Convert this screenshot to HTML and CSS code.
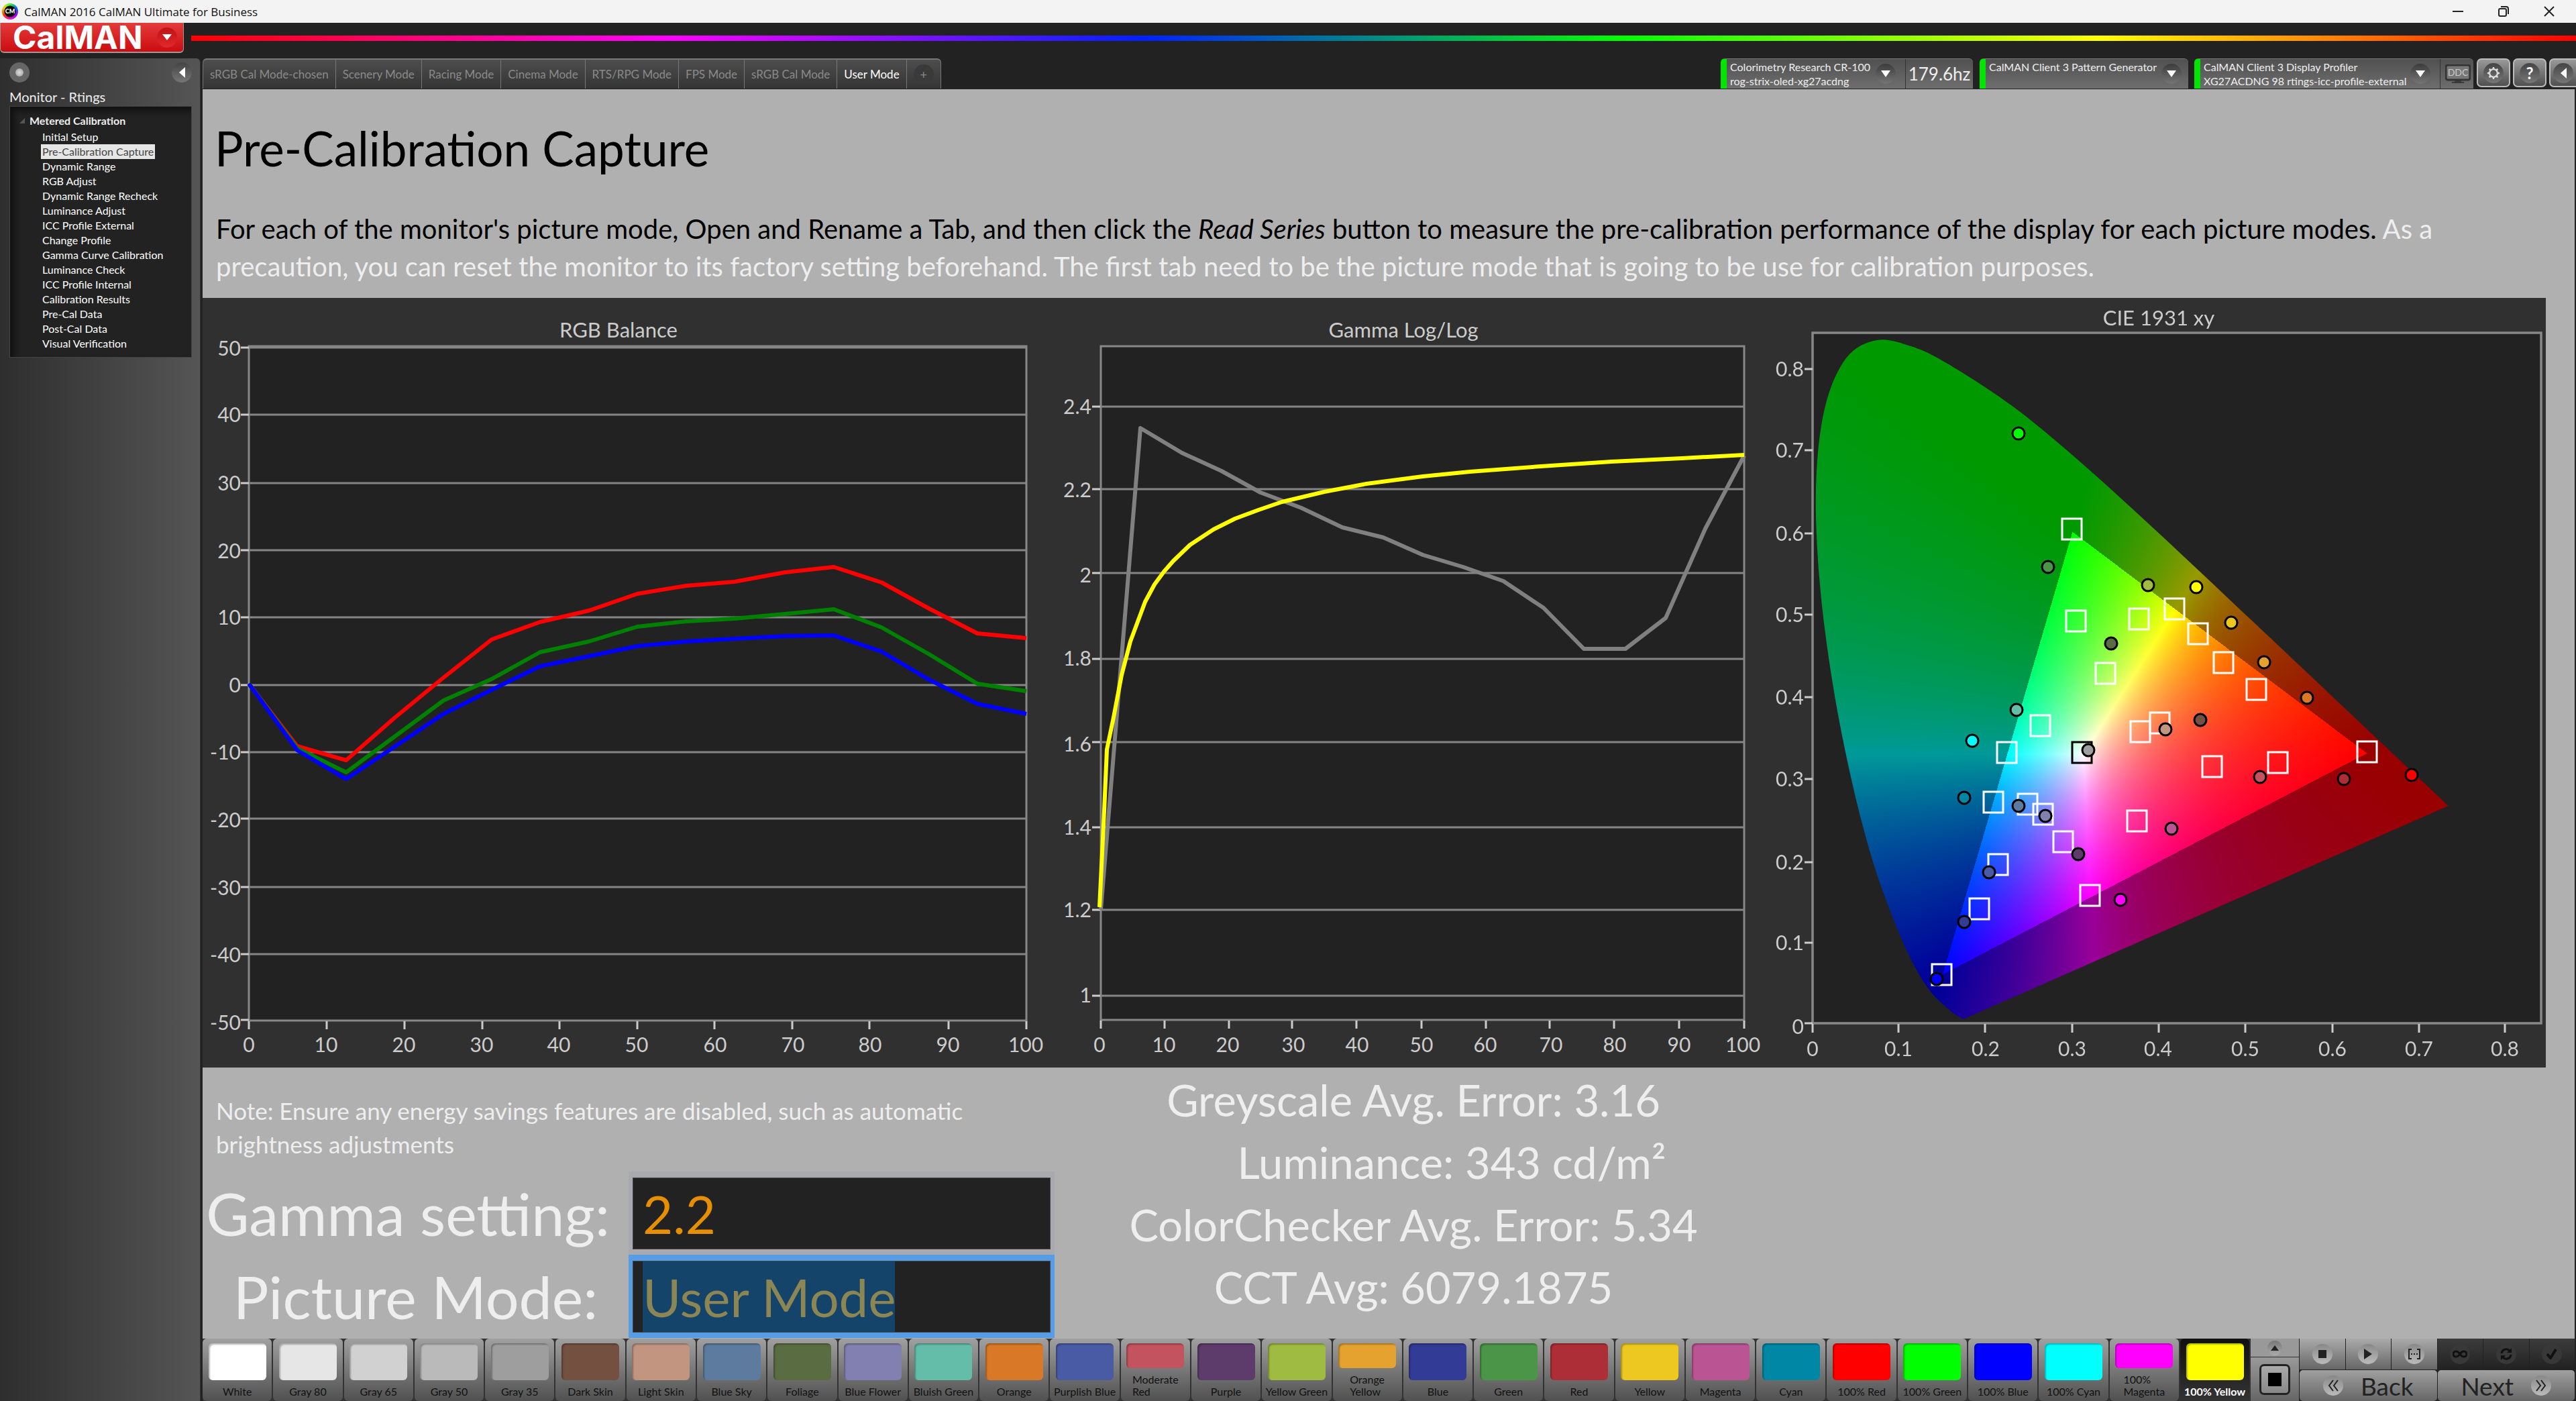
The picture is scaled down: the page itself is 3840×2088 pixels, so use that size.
FILE: index.html
```html
<!DOCTYPE html>
<html lang="en">
<head>
<meta charset="utf-8">
<title>CalMAN 2016 CalMAN Ultimate for Business</title>
<link rel="stylesheet" href="styles.css">
</head>
<body>
<header class="titlebar">
  <span class="app-icon">CM</span>
  <span class="window-title">CalMAN 2016 CalMAN Ultimate for Business</span>
  <div class="window-controls">
    <button type="button" aria-label="Minimize"><svg width="16" height="16" viewBox="0 0 16 16"><path d="M0 8h16" class="thin"/></svg></button>
    <button type="button" aria-label="Restore"><svg width="16" height="16" viewBox="0 0 16 16"><rect x="1" y="4" width="11" height="11" rx="2" class="thin"/><path d="M4 1h8a3 3 0 0 1 3 3v8" class="thin"/></svg></button>
    <button type="button" aria-label="Close"><svg width="16" height="16" viewBox="0 0 16 16"><path d="M1 1l14 14M15 1L1 15" class="thin"/></svg></button>
  </div>
</header>

<div class="brandbar">
  <button type="button" class="brand">CalMAN<span class="knob knob-red"><svg width="14" height="10" viewBox="0 0 14 10"><path d="M0 0h14L7 9z" fill="#fff"/></svg></span></button>
  <div class="rainbow"></div>
</div>

<div class="workspace">
  <aside class="sidebar">
    <div class="sidebar-tools">
      <button type="button" class="knob knob-dot" aria-label="Record"><span class="dot"></span></button>
      <button type="button" class="knob" aria-label="Collapse"><svg width="9" height="16" viewBox="0 0 9 16"><path d="M9 0v16L0 8z" fill="#fff"/></svg></button>
    </div>
    <h2 class="sidebar-title">Monitor - Rtings</h2>
    <nav class="steps">
      <div class="steps-head"><svg width="8" height="8" viewBox="0 0 8 8"><path d="M8 0v8H0z" fill="#555"/></svg>Metered Calibration</div>
      <ul>
        <li><a href="#">Initial Setup</a></li>
        <li><a href="#" class="current">Pre-Calibration Capture</a></li>
        <li><a href="#">Dynamic Range</a></li>
        <li><a href="#">RGB Adjust</a></li>
        <li><a href="#">Dynamic Range Recheck</a></li>
        <li><a href="#">Luminance Adjust</a></li>
        <li><a href="#">ICC Profile External</a></li>
        <li><a href="#">Change Profile</a></li>
        <li><a href="#">Gamma Curve Calibration</a></li>
        <li><a href="#">Luminance Check</a></li>
        <li><a href="#">ICC Profile Internal</a></li>
        <li><a href="#">Calibration Results</a></li>
        <li><a href="#">Pre-Cal Data</a></li>
        <li><a href="#">Post-Cal Data</a></li>
        <li><a href="#">Visual Verification</a></li>
      </ul>
    </nav>
  </aside>

  <main class="main">
    <div class="toolbar">
      <div class="tabs">
        <button type="button" class="tab">sRGB Cal Mode-chosen</button>
        <button type="button" class="tab">Scenery Mode</button>
        <button type="button" class="tab">Racing Mode</button>
        <button type="button" class="tab">Cinema Mode</button>
        <button type="button" class="tab">RTS/RPG Mode</button>
        <button type="button" class="tab">FPS Mode</button>
        <button type="button" class="tab">sRGB Cal Mode</button>
        <button type="button" class="tab active">User Mode</button>
        <button type="button" class="tab tab-add" aria-label="Add tab"><span class="knob knob-dim">+</span></button>
      </div>
      <div class="devices">
        <div class="device device-meter">
          <div class="device-name">Colorimetry Research CR-100<br>rog-strix-oled-xg27acdng</div>
          <button type="button" class="knob knob-pick" aria-label="Meter"><svg width="14" height="10" viewBox="0 0 14 10"><path d="M0 0h14L7 10z" fill="#fff"/></svg></button>
          <div class="device-rate">179.6hz</div>
        </div>
        <div class="device device-source">
          <div class="device-name">CalMAN Client 3 Pattern Generator</div>
          <button type="button" class="knob knob-pick" aria-label="Source"><svg width="14" height="10" viewBox="0 0 14 10"><path d="M0 0h14L7 10z" fill="#fff"/></svg></button>
        </div>
        <div class="device device-display">
          <div class="device-name">CalMAN Client 3 Display Profiler<br>XG27ACDNG 98 rtings-icc-profile-external</div>
          <button type="button" class="knob knob-pick" aria-label="Display"><svg width="14" height="10" viewBox="0 0 14 10"><path d="M0 0h14L7 10z" fill="#fff"/></svg></button>
          <div class="device-ddc"><svg width="38" height="28" viewBox="0 0 38 28"><path d="M14 23h10v3h4v2H10v-2h4z" fill="#3a3a3a"/><rect x="1" y="1" width="36" height="22" rx="3" fill="#777" stroke="#333" stroke-width="3"/><text x="19" y="17" class="ddc">DDC</text></svg></div>
        </div>
        <div class="tools">
          <button type="button" class="tool" aria-label="Settings"><span class="knob"><svg width="20" height="20" viewBox="0 0 22 22"><g fill="#ddd"><path id="tooth" d="M9 4l1-3h2l1 3z"/><use href="#tooth" transform="rotate(45 11 11)"/><use href="#tooth" transform="rotate(90 11 11)"/><use href="#tooth" transform="rotate(135 11 11)"/><use href="#tooth" transform="rotate(180 11 11)"/><use href="#tooth" transform="rotate(225 11 11)"/><use href="#tooth" transform="rotate(270 11 11)"/><use href="#tooth" transform="rotate(315 11 11)"/></g><circle cx="11" cy="11" r="6.5" fill="none" stroke="#ddd" stroke-width="2.5"/></svg></span></button>
          <button type="button" class="tool" aria-label="Help"><span class="knob">?</span></button>
          <button type="button" class="tool tool-last" aria-label="Collapse panel"><span class="knob"><svg width="9" height="16" viewBox="0 0 9 16"><path d="M9 0v16L0 8z" fill="#fff"/></svg></span></button>
        </div>
      </div>
    </div>

    <section class="page">
      <h1>Pre-Calibration Capture</h1>
      <p class="intro">For each of the monitor's picture mode, Open and Rename a Tab, and then click the <em>Read Series</em> button to measure the pre-calibration performance of the display for each picture modes. <span class="light">As a<br>precaution, you can reset the monitor to its factory setting beforehand. The first tab need to be the picture mode that is going to be use for calibration purposes.</span></p>

      <div class="charts">
        <svg class="chart" viewBox="302 444 1268 1147" role="img" aria-label="RGB Balance">
          <rect class="plot" x="371" y="516" width="1159" height="1005"/>
          <path class="grid" d="M371 518H1530M371 618H1530M371 720H1530M371 820H1530M371 920H1530M371 1021H1530M371 1121H1530M371 1220H1530M371 1322H1530M371 1422H1530"/>
          <path class="tick" d="M359 518h12M359 618h12M359 720h12M359 820h12M359 920h12M359 1021h12M359 1121h12M359 1220h12M359 1322h12M359 1422h12M359 1520h12M371 1522v12M487 1522v12M603 1522v12M719 1522v12M834 1522v12M950 1522v12M1065 1522v12M1181 1522v12M1296 1522v12M1414 1522v12M1530 1522v12"/>
          <text class="name" x="922" y="503">RGB Balance</text>
          <g class="ylab"><text x="359" y="530">50</text><text x="359" y="629">40</text><text x="359" y="731">30</text><text x="359" y="832">20</text><text x="359" y="931">10</text><text x="359" y="1032">0</text><text x="359" y="1132">-10</text><text x="359" y="1233">-20</text><text x="359" y="1334">-30</text><text x="359" y="1434">-40</text><text x="359" y="1535">-50</text></g>
          <g class="xlab"><text x="371" y="1568">0</text><text x="486" y="1568">10</text><text x="602" y="1568">20</text><text x="718" y="1568">30</text><text x="833" y="1568">40</text><text x="949" y="1568">50</text><text x="1066" y="1568">60</text><text x="1182" y="1568">70</text><text x="1297" y="1568">80</text><text x="1413" y="1568">90</text><text x="1529" y="1568">100</text></g>
          <polyline class="series" stroke="#f00" points="371,1019 443,1112 516,1133 588,1070 661,1010 733,953 805,927 878,910 950,885 1023,873 1095,867 1170,853 1243,845 1314,868 1385,907 1457,944 1530,951"/>
          <polyline class="series" stroke="#008000" points="371,1019 443,1115 516,1151 588,1098 661,1044 733,1012 805,972 878,956 950,934 1023,926 1095,922 1170,915 1243,908 1314,935 1385,975 1457,1019 1530,1030"/>
          <polyline class="series" stroke="#00f" points="371,1019 443,1118 516,1161 588,1113 661,1064 733,1028 805,993 878,978 950,963 1023,956 1095,952 1170,948 1243,947 1314,971 1385,1013 1457,1049 1530,1064"/>
        </svg>

        <svg class="chart" viewBox="1570 444 1070 1147" role="img" aria-label="Gamma Log/Log">
          <rect class="plot" x="1641" y="516" width="959" height="1004"/>
          <path class="grid" d="M1641 606H2600M1641 729H2600M1641 854H2600M1641 982H2600M1641 1106H2600M1641 1233H2600M1641 1356H2600M1641 1484H2600"/>
          <path class="tick" d="M1628 606h12M1628 729h12M1628 854h12M1628 982h12M1628 1106h12M1628 1233h12M1628 1356h12M1628 1484h12M1641 1521v12M1736 1521v12M1832 1521v12M1926 1521v12M2022 1521v12M2119 1521v12M2215 1521v12M2310 1521v12M2406 1521v12M2503 1521v12M2600 1521v12"/>
          <text class="name" x="2092" y="503">Gamma Log/Log</text>
          <g class="ylab"><text x="1627" y="617">2.4</text><text x="1627" y="741">2.2</text><text x="1627" y="868">2</text><text x="1627" y="992">1.8</text><text x="1627" y="1120">1.6</text><text x="1627" y="1244">1.4</text><text x="1627" y="1367">1.2</text><text x="1627" y="1494">1</text></g>
          <g class="xlab"><text x="1639" y="1568">0</text><text x="1735" y="1568">10</text><text x="1830" y="1568">20</text><text x="1928" y="1568">30</text><text x="2023" y="1568">40</text><text x="2119" y="1568">50</text><text x="2214" y="1568">60</text><text x="2312" y="1568">70</text><text x="2407" y="1568">80</text><text x="2503" y="1568">90</text><text x="2598" y="1568">100</text></g>
          <polyline class="series" stroke="#808080" points="1641,1356 1700,638 1762,675 1821,702 1879,734 1940,757 2001,786 2062,801 2121,827 2181,845 2241,866 2301,906 2361,967 2423,967 2483,921 2542,788 2600,679"/>
          <polyline class="series" stroke="#ff0" points="1639,1352 1646,1209 1650,1117 1660,1069 1672,1006 1685,956 1707,897 1721,871 1735,852 1749,836 1774,812 1809,789 1841,773 1876,760 1911,748 1974,733 2037,721 2121,710 2191,703 2297,695 2402,688 2507,683 2600,678"/>
        </svg>

        <svg class="chart" viewBox="2640 444 1155 1147" role="img" aria-label="CIE 1931 xy">
          <rect class="plot" x="2702" y="496" width="1086" height="1029"/>
          <foreignObject x="2702" y="496" width="1086" height="1029"><canvas id="gamut" class="gamut" width="1086" height="1029"></canvas></foreignObject>
          <rect class="frame" x="2702" y="496" width="1086" height="1029"/>
          <path class="tick" d="M2690 550h12M2690 671h12M2690 795h12M2690 916h12M2690 1039h12M2690 1161h12M2690 1285h12M2690 1405h12M2690 1525h12M2702 1526v13M2830 1526v13M2959 1526v13M3089 1526v13M3218 1526v13M3347 1526v13M3477 1526v13M3606 1526v13M3734 1526v13"/>
          <text class="name" x="3218" y="485">CIE 1931 xy</text>
          <g class="ylab"><text x="2689" y="561">0.8</text><text x="2689" y="682">0.7</text><text x="2689" y="806">0.6</text><text x="2689" y="927">0.5</text><text x="2689" y="1050">0.4</text><text x="2689" y="1172">0.3</text><text x="2689" y="1296">0.2</text><text x="2689" y="1416">0.1</text><text x="2689" y="1541">0</text></g>
          <g class="xlab"><text x="2702" y="1574">0</text><text x="2830" y="1574">0.1</text><text x="2960" y="1574">0.2</text><text x="3089" y="1574">0.3</text><text x="3217" y="1574">0.4</text><text x="3347" y="1574">0.5</text><text x="3477" y="1574">0.6</text><text x="3606" y="1574">0.7</text><text x="3734" y="1574">0.8</text></g>
          <g id="targets" class="targets"></g>
          <g id="readings" class="readings"></g>
        </svg>
      </div>

      <div class="results">
        <form class="settings">
          <p class="note">Note: Ensure any energy savings features are disabled, such as automatic<br>brightness adjustments</p>
          <div class="field"><label for="gamma">Gamma setting:&nbsp;</label><div class="box"><input id="gamma" type="text" value="2.2"></div></div>
          <div class="field focused"><label for="mode">Picture Mode:</label><div class="box"><input id="mode" type="text" value="User Mode"></div></div>
        </form>
        <div class="stats">
          <p>Greyscale Avg. Error: 3.16</p>
          <p class="inset">Luminance: 343 cd/m²</p>
          <p>ColorChecker Avg. Error: 5.34</p>
          <p>CCT Avg: 6079.1875</p>
        </div>
      </div>
    </section>

    <footer class="footer">
      <div class="patches">
        <button type="button" class="patch"><i style="background:#ffffff"></i><span>White</span></button>
        <button type="button" class="patch"><i style="background:#e6e6e6"></i><span>Gray 80</span></button>
        <button type="button" class="patch"><i style="background:#d1d1d1"></i><span>Gray 65</span></button>
        <button type="button" class="patch"><i style="background:#bababa"></i><span>Gray 50</span></button>
        <button type="button" class="patch"><i style="background:#9e9e9e"></i><span>Gray 35</span></button>
        <button type="button" class="patch"><i style="background:#735040"></i><span>Dark Skin</span></button>
        <button type="button" class="patch"><i style="background:#c29580"></i><span>Light Skin</span></button>
        <button type="button" class="patch"><i style="background:#5d7b9f"></i><span>Blue Sky</span></button>
        <button type="button" class="patch"><i style="background:#5a6c41"></i><span>Foliage</span></button>
        <button type="button" class="patch"><i style="background:#8280b0"></i><span>Blue Flower</span></button>
        <button type="button" class="patch"><i style="background:#63bda8"></i><span>Bluish Green</span></button>
        <button type="button" class="patch"><i style="background:#d97827"></i><span>Orange</span></button>
        <button type="button" class="patch"><i style="background:#4a5ba5"></i><span>Purplish Blue</span></button>
        <button type="button" class="patch"><i style="background:#c3535f"></i><span>Moderate<br>Red</span></button>
        <button type="button" class="patch"><i style="background:#5d3c6b"></i><span>Purple</span></button>
        <button type="button" class="patch"><i style="background:#9fbb41"></i><span>Yellow Green</span></button>
        <button type="button" class="patch"><i style="background:#e6a22e"></i><span>Orange<br>Yellow</span></button>
        <button type="button" class="patch"><i style="background:#323b95"></i><span>Blue</span></button>
        <button type="button" class="patch"><i style="background:#4a9548"></i><span>Green</span></button>
        <button type="button" class="patch"><i style="background:#ae2e37"></i><span>Red</span></button>
        <button type="button" class="patch"><i style="background:#ecc821"></i><span>Yellow</span></button>
        <button type="button" class="patch"><i style="background:#ba5493"></i><span>Magenta</span></button>
        <button type="button" class="patch"><i style="background:#0087a5"></i><span>Cyan</span></button>
        <button type="button" class="patch"><i style="background:#ff0000"></i><span>100% Red</span></button>
        <button type="button" class="patch"><i style="background:#00ff00"></i><span>100% Green</span></button>
        <button type="button" class="patch"><i style="background:#0000ff"></i><span>100% Blue</span></button>
        <button type="button" class="patch"><i style="background:#00ffff"></i><span>100% Cyan</span></button>
        <button type="button" class="patch"><i style="background:#ff00ff"></i><span>100%<br>Magenta</span></button>
        <button type="button" class="patch selected"><i style="background:#ffff00"></i><span>100% Yellow</span></button>
      </div>
      <div class="pattern">
        <button type="button" class="pattern-up" aria-label="Show patterns"><span class="knob knob-small"><svg width="12" height="8" viewBox="0 0 12 8"><path d="M6 0l6 8H0z" fill="#222"/></svg></span></button>
        <button type="button" class="pattern-window" aria-label="Pattern window"><span class="window-icon"><span></span></span></button>
      </div>
      <div class="transport">
        <div class="transport-row">
          <button type="button" class="cell" aria-label="Stop"><span class="knob knob-light"><svg width="12" height="12" viewBox="0 0 12 12"><path d="M0 0h12v12H0z" fill="#222"/></svg></span></button>
          <button type="button" class="cell" aria-label="Read"><span class="knob knob-light"><svg width="12" height="16" viewBox="0 0 12 16"><path d="M0 0l12 8L0 16z" fill="#222"/></svg></span></button>
          <button type="button" class="cell" aria-label="Read series"><span class="knob knob-light"><svg width="18" height="16" viewBox="0 0 18 16"><path d="M5 1H1v14h4M13 1h4v14h-4" fill="none" stroke="#222" stroke-width="2"/><path d="M4 7h2v2H4zM8 7h2v2H8zM12 7h2v2h-2z" fill="#222"/></svg></span></button>
          <button type="button" class="cell dark" aria-label="Continuous"><span class="knob knob-dark"><svg width="22" height="12" viewBox="0 0 22 12"><path d="M11 6C9 3 7 2 5 2a4 4 0 0 0 0 8c2 0 4-1 6-4s4-4 6-4a4 4 0 0 1 0 8c-2 0-4-1-6-4z" fill="none" stroke="#111" stroke-width="3"/></svg></span></button>
          <button type="button" class="cell dark" aria-label="Refresh"><span class="knob knob-dark"><svg width="20" height="20" viewBox="0 0 20 20"><path d="M3 9a7 7 0 0 1 12-4M17 11a7 7 0 0 1-12 4" fill="none" stroke="#111" stroke-width="3"/><path d="M18 1v7h-7zM2 19v-7h7z" fill="#111"/></svg></span></button>
          <button type="button" class="cell dark" aria-label="Accept"><span class="knob knob-dark"><svg width="16" height="16" viewBox="0 0 16 16"><path d="M1 8l5 6 8-13" fill="none" stroke="#111" stroke-width="4"/></svg></span></button>
        </div>
        <div class="transport-row">
          <button type="button" class="step-btn"><span class="knob knob-light"><svg width="16" height="18" viewBox="0 0 16 18"><path d="M8 1L2 9l6 8M15 1L9 9l6 8" fill="none" stroke="#222" stroke-width="2"/></svg></span>Back</button>
          <button type="button" class="step-btn">Next<span class="knob knob-light"><svg width="16" height="18" viewBox="0 0 16 18"><path d="M1 1l6 8-6 8M8 1l6 8-6 8" fill="none" stroke="#222" stroke-width="2"/></svg></span></button>
        </div>
      </div>
    </footer>
  </main>
</div>
<script src="chart.js"></script>
</body>
</html>
```
FILE: styles.css
```css
* { box-sizing: border-box; }
body {
  margin: 0;
  min-height: 100vh;
  display: flex;
  flex-direction: column;
  background: #222;
  color: #eee;
  font-family: Lato, "Open Sans", sans-serif;
  font-size: 16px;
}
button { font: inherit; color: inherit; border: 0; padding: 0; background: none; }
h1, h2, p, ul { margin: 0; padding: 0; font-weight: 400; list-style: none; }
svg { display: block; }

/* window chrome */
.titlebar { display: flex; align-items: center; height: 34px; padding-left: 3px; background: #f3f3f3; color: #111; }
.app-icon {
  width: 24px; height: 24px; margin-right: 9px; border-radius: 50%;
  background: radial-gradient(circle, #000 8px, transparent 9px), conic-gradient(#3f3, #06f, #90f, #f0c, #f30, #fc0, #3f3);
  color: #fff; font-size: 9px; font-weight: 900; line-height: 24px; text-align: center;
}
.window-title { font-family: "Open Sans", sans-serif; font-size: 17px; }
.window-controls { display: flex; margin-left: auto; padding-right: 6px; }
.window-controls button { display: flex; align-items: center; justify-content: center; width: 68px; height: 30px; }
.thin { fill: none; stroke: #222; stroke-width: 2; }

.brandbar { display: flex; align-items: flex-start; height: 53px; }
.brand {
  display: flex; align-items: center; justify-content: space-between; width: 274px; height: 45px; padding: 0 9px 0 18px;
  border: solid #999; border-width: 0 1px 2px; border-radius: 0 0 6px 6px;
  background: linear-gradient(#e33b3b, #cc0c0f);
  color: #fff; font-family: Inter, sans-serif; font-size: 48px; font-weight: 700; line-height: 42px;
}
.rainbow { flex: 1; height: 8px; margin: 19px 0 0 11px; background: linear-gradient(90deg, #f00, #f0f 20%, #0020ff 40%, #0f0 60%, #ff0 80%, #f00); }

.knob {
  display: flex; align-items: center; justify-content: center; flex: none;
  width: 30px; height: 30px; border-radius: 50%;
  background: linear-gradient(#444, #777);
  color: #fff; font-size: 24px; font-weight: 700;
}
.knob-red { background: linear-gradient(#c01018, #e02a2a); }
.knob-dot { background: #666; }
.dot { width: 12px; height: 12px; border-radius: 50%; background: radial-gradient(#ddd, #999); }
.knob-pick { background: linear-gradient(#3c3c3c, #757575); }
.knob-dim { background: #3a3a3a; color: #888; font-size: 18px; font-weight: 400; }
.knob-small { width: 22px; height: 22px; background: linear-gradient(#777, #aaa); }
.knob-light { background: linear-gradient(#888, #bbb); }
.knob-dark { background: #383838; }

/* layout */
.workspace { flex: 1; display: grid; grid-template-columns: 302px 1fr; }
.sidebar { margin-right: 3px; border-right: 1px solid #333; padding: 6px 12px 0 14px; border-radius: 0 6px 0 0; background: linear-gradient(90deg, #2e2e2e, #555); }
.sidebar-tools { display: flex; justify-content: space-between; }
.sidebar-title { padding: 9px 0 2px; font-size: 20px; line-height: 24px; color: #eee; }
.steps { height: 375px; border: 1px solid #444; padding: 7px 0 0 14px; background: #222; box-shadow: inset 6px 6px 10px #111; }
.steps-head { display: flex; align-items: center; gap: 7px; height: 27px; font-weight: 700; }
.steps ul { padding-left: 32px; }
.steps li { height: 22px; line-height: 22px; white-space: nowrap; }
.steps a { display: inline-block; padding: 0 2px; color: #fff; text-decoration: none; }
.steps .current { background: #e6e6e6; color: #444; }

.main { display: flex; flex-direction: column; min-width: 0; }
.toolbar { display: flex; justify-content: space-between; height: 46px; padding-bottom: 1px; }
.tabs { display: flex; border-top: 2px solid #777; border-right: 1px solid #777; border-radius: 6px 6px 0 0; background: linear-gradient(#4d4d4d, #343434); }
.tab { padding: 0 10px; border-left: 1px solid #777; color: #8a8a8a; font-size: 17px; white-space: nowrap; }
.tab:first-child { border-top-left-radius: 6px; }
.tab.active { color: #fff; }
.devices { display: flex; }
.device { display: flex; border-left: 9px solid #00e600; border-top: 1px solid #777; border-radius: 6px 6px 0 0; background: linear-gradient(#505050, #6e6e6e); }
.device-name { flex: 1; padding: 1px 0 0 5px; line-height: 21px; white-space: nowrap; }
.device-meter { width: 376px; margin-right: 10px; }
.device-source { width: 311px; margin-right: 9px; }
.device-display { width: 416px; margin-right: 5px; }
.device .knob-pick { align-self: center; margin-right: 14px; }
.device-source .knob-pick { margin-right: 10px; }
.device-rate { width: 101px; border-left: 1px solid #333; font-size: 26px; line-height: 44px; text-align: center; }
.device-ddc { width: 50px; border-left: 1px solid #333; padding: 8px 0 0 7px; }
.ddc { font-size: 14px; text-anchor: middle; fill: #ccc; }
.tools { display: flex; gap: 4px; }
.tool { display: flex; align-items: center; justify-content: center; width: 50px; height: 43px; border: 2px solid #bbb; border-radius: 7px; background: linear-gradient(#999, #505050); }
.tool-last { width: 40px; border-right: 0; border-radius: 7px 0 0 7px; }

.page { flex: 1; display: flex; flex-direction: column; margin-right: 2px; background: #b0b0b0; }
h1 { padding: 45px 20px 49px 18px; color: #000; font-size: 71px; line-height: 86px; }
.intro { padding: 0 20px 19px 20px; color: #000; font-size: 40px; line-height: 56px; white-space: nowrap; }
.light { color: #eee; }

/* charts */
.charts { display: grid; grid-template-columns: 1268fr 1070fr 1155fr; margin-right: 43px; background: #303030; }
.chart { width: 100%; height: auto; font-size: 30px; fill: #ccc; }
.plot { fill: #222; stroke: #888; stroke-width: 3; }
.frame { fill: none; stroke: #888; stroke-width: 3; }
.grid { fill: none; stroke: #858585; stroke-width: 3; }
.tick { fill: none; stroke: #ccc; stroke-width: 3; }
.name, .xlab { text-anchor: middle; }
.name { font-size: 31px; }
.ylab { text-anchor: end; }
.series { fill: none; stroke-width: 6; stroke-linejoin: round; }
.gamut { display: block; }
.targets { fill: none; stroke: #fff; stroke-width: 3; }
.readings { stroke: #000; stroke-width: 3; }

/* form and averages */
.results { flex: 1; display: grid; grid-template-columns: 1270fr 2266fr; }
.settings { display: flex; flex-direction: column; }
.note { padding: 39px 0 16px 20px; color: #eee; font-size: 35px; line-height: 50px; white-space: nowrap; }
.field { display: grid; grid-template-columns: minmax(0, 1fr) minmax(0, 1fr); height: 124px; }
.field label { color: #eee; font-size: 88px; line-height: 124px; text-align: center; white-space: nowrap; }
.box { display: flex; border: solid #a9a9b0; border-width: 9px 6px 8px; }
.box input { width: 100%; border: 1px solid #444; border-radius: 0; padding: 0 0 0 14px; background: #222; color: #e68f00; font: inherit; font-size: 78px; outline: 0; }
.focused .box { border-color: #569de5; }
.focused input { background: linear-gradient(90deg, #222 14px, #14446a 14px 390px, #222 390px); color: #8c8554; }
.stats { width: 1068px; padding-left: 2px; padding-top: 2px; color: #eee; font-size: 65px; line-height: 93px; text-align: center; white-space: nowrap; }
.inset { padding-left: 114px; }

/* footer */
.footer { display: flex; height: 93px; margin-right: 2px; background: #222; }
.patches { flex: 1; display: flex; background: #333; }
.patch { flex: 1 1 0; display: flex; flex-direction: column; align-items: center; min-width: 0; margin-right: 2px; padding: 7px 0 5px; border-radius: 6px; background: linear-gradient(#a0a0a0, #505050); color: #111; line-height: 18px; white-space: nowrap; }
.patch i { flex: 1; width: 86px; margin-bottom: 8px; border-radius: 6px; box-shadow: inset 2px 2px 2px #0004; }
.patch span { text-align: left; }
.patch.selected { background: linear-gradient(#111, #333); color: #fff; font-weight: 700; }
.pattern { display: flex; flex-direction: column; width: 73px; padding-right: 1px; }
.pattern-up { display: flex; align-items: center; justify-content: center; height: 28px; border-bottom: 1px solid #333; background: #999; }
.pattern-window { flex: 1; display: flex; align-items: center; justify-content: center; background: linear-gradient(#999, #666); }
.window-icon { display: flex; align-items: center; justify-content: center; width: 46px; height: 46px; border: 3px solid #222; border-radius: 7px; background: linear-gradient(#aaa, #888); }
.window-icon span { width: 20px; height: 20px; background: #000; }
.transport { width: 410px; display: grid; grid-template-rows: 46px 1fr; row-gap: 1px; }
.transport-row { display: flex; gap: 1px; }
.cell { flex: 1; display: flex; align-items: center; justify-content: center; background: linear-gradient(#aaa, #666); }
.cell.dark { background: linear-gradient(#3c3c3c, #222); }
.step-btn { flex: 1; display: flex; align-items: center; justify-content: center; gap: 26px; border-radius: 5px; background: linear-gradient(#a0a0a0, #666); color: #222; font-size: 37px; }
```
FILE: chart.js
```js
// Spectral locus, CIE 1931 x,y
const locus = [
  [.1741, .0050], [.1644, .0109], [.1566, .0177], [.1440, .0297], [.1355, .0399],
  [.1241, .0578], [.1096, .0868], [.0913, .1327], [.0687, .2007], [.0454, .2950],
  [.0235, .4127], [.0082, .5384], [.0039, .6548], [.0139, .7502], [.0389, .8120],
  [.0743, .8338], [.1142, .8262], [.1547, .8059], [.2296, .7543], [.3016, .6923],
  [.3731, .6245], [.4441, .5547], [.5125, .4866], [.5752, .4242], [.6270, .3725],
  [.6915, .3083], [.7347, .2653]
];
const canvas = document.getElementById('gamut');
const W = canvas.width, H = canvas.height, SX = 1290, SY = 1221;

const layer = document.createElement('canvas');
layer.width = W; layer.height = H;
const lctx = layer.getContext('2d');
const img = lctx.createImageData(W, H);
for (let j = 0; j < H; j++) {
  for (let i = 0; i < W; i++) {
    const x = i / SX, y = Math.max((H - j) / SY, .001);
    const X = x / y, Z = (1 - x - y) / y;
    const rgb = [
      3.2406 * X - 1.5372 - .4986 * Z,
      -.9689 * X + 1.8758 + .0415 * Z,
      .0557 * X - .2040 + 1.0570 * Z
    ];
    const scale = (Math.min(...rgb) < 0 ? 153 : 255) / Math.max(...rgb);
    const o = (j * W + i) * 4;
    for (let c = 0; c < 3; c++) img.data[o + c] = Math.max(rgb[c], 0) * scale;
    img.data[o + 3] = 255;
  }
}
lctx.putImageData(img, 0, 0);

const ctx = canvas.getContext('2d');
const pts = locus.map(([x, y]) => [x * SX, H - y * SY]);
ctx.beginPath();
ctx.moveTo(...pts[0]);
for (let k = 0; k < pts.length - 1; k++) {
  const a = pts[Math.max(k - 1, 0)], b = pts[k], c = pts[k + 1], d = pts[Math.min(k + 2, pts.length - 1)];
  ctx.bezierCurveTo(b[0] + (c[0] - a[0]) / 6, b[1] + (c[1] - a[1]) / 6,
    c[0] - (d[0] - b[0]) / 6, c[1] - (d[1] - b[1]) / 6, c[0], c[1]);
}
ctx.closePath();
ctx.clip();
ctx.drawImage(layer, 0, 0);

// Target boxes and measured points, in chart coordinates
const targets = [
  [3089, 788], [3095, 925], [3189, 922], [3242, 907], [3277, 944], [3315, 987], [3364, 1027],
  [3139, 1003], [3042, 1081], [2992, 1121], [3220, 1077], [3191, 1090], [3298, 1142], [3396, 1136],
  [3529, 1120], [2972, 1195], [3023, 1198], [3046, 1213], [3076, 1254], [3186, 1223], [2979, 1288],
  [2951, 1354], [3116, 1334], [2895, 1452], [3104, 1121, '#000']
];
const readings = [
  [3009, 646, '#00ff00'], [3053, 845, '#4a9548'], [3202, 872, '#9fbb41'], [3274, 875, '#ffff00'],
  [3326, 928, '#ecc821'], [3375, 987, '#e6a22e'], [3439, 1040, '#d97827'], [3147, 959, '#5a6c41'],
  [3006, 1058, '#63bda8'], [2940, 1104, '#00ffff'], [3228, 1087, '#c29580'], [3280, 1073, '#735040'],
  [3113, 1118, '#9e9e9e'], [3369, 1158, '#c3535f'], [3494, 1161, '#ae2e37'], [3595, 1155, '#ff0000'],
  [2928, 1189, '#0087a5'], [3009, 1201, '#5d7b9f'], [3049, 1216, '#8280b0'], [3237, 1235, '#ba5493'],
  [3098, 1273, '#5d3c6b'], [2965, 1300, '#4a5ba5'], [2928, 1374, '#323b95'], [3161, 1341, '#ff00ff'],
  [2887, 1459, '#0000ff']
];
const add = (id, tag, attrs) => {
  const el = document.createElementNS('http://www.w3.org/2000/svg', tag);
  for (const k in attrs) el.setAttribute(k, attrs[k]);
  document.getElementById(id).append(el);
};
for (const [x, y, stroke] of targets) {
  add('targets', 'rect', { x: x - 15, y: y - 15, width: 29, height: 31, ...(stroke && { stroke }) });
}
for (const [cx, cy, fill] of readings) add('readings', 'circle', { cx, cy, r: 9, fill });
```
